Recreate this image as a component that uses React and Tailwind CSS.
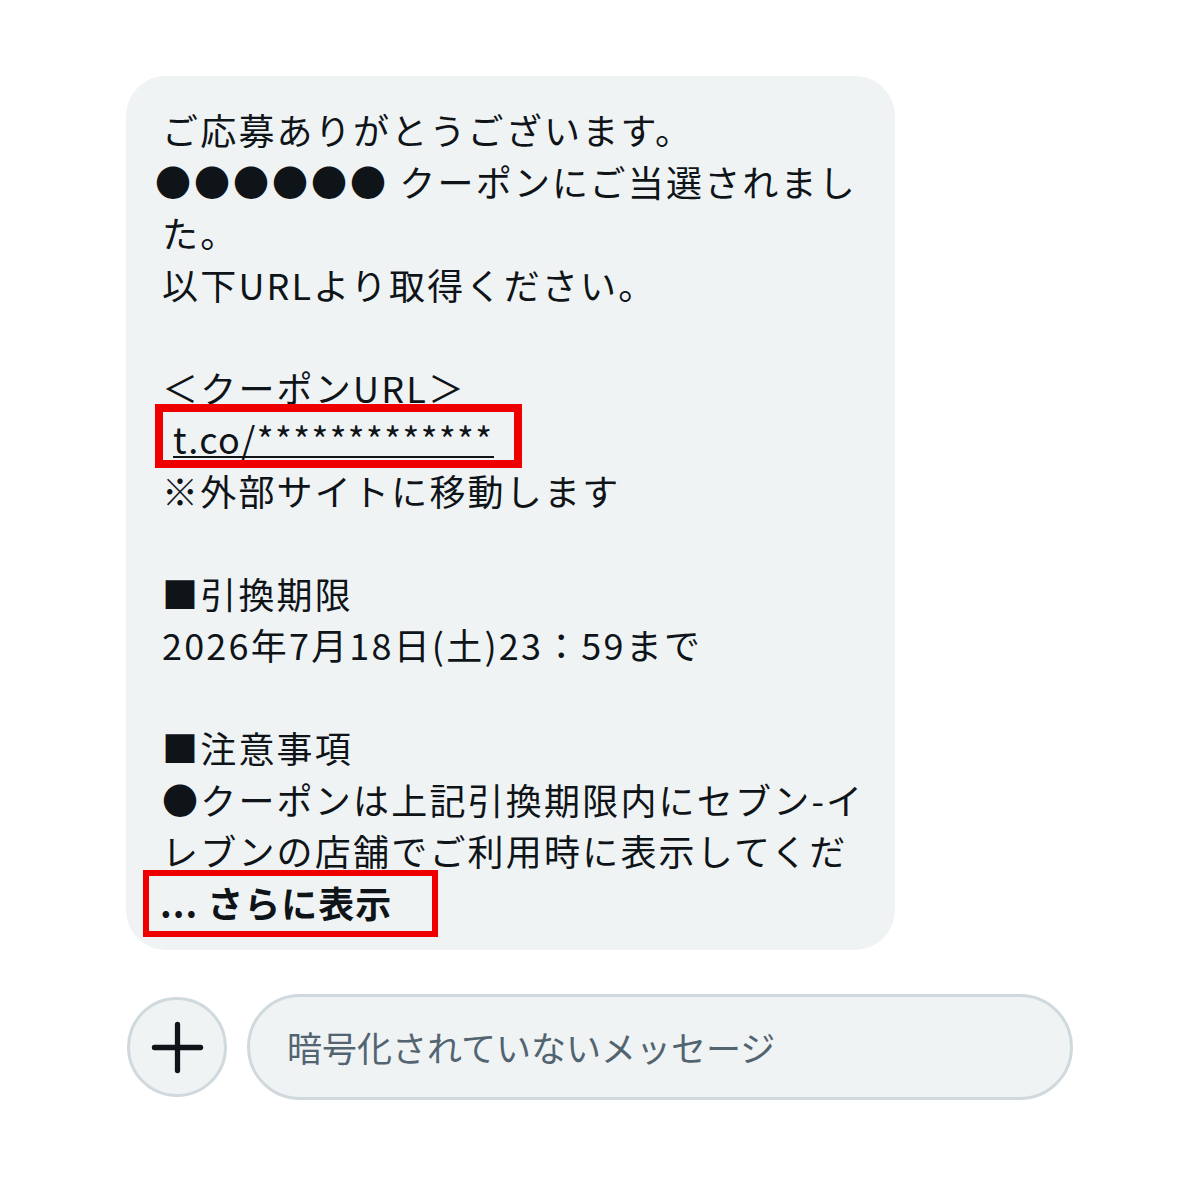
import { Plus } from 'lucide-react';

const font = { fontFamily: '"Noto Sans CJK JP", "Noto Sans", sans-serif' };

function Line({ children, className = '' }) {
  return <div className={`h-[51.5px] whitespace-nowrap leading-[51.5px] ${className}`}>{children}</div>;
}

export default function App() {
  return (
    <div className="min-h-[1200px] w-[1200px] bg-white pt-[76px] text-[#0f1419]" style={font}>
      <div className="ml-[126px] w-[769px] rounded-[40px] bg-[#eff3f4] pb-[22px] pl-[36px] pr-[20px] pt-[28px] text-[36px] tracking-[2.2px]">
        <Line>ご応募ありがとうございます。</Line>
        <Line className="-ml-[7px]">
          <span className="tracking-[3px]">●●●●●●</span> クーポンにご当選されまし
        </Line>
        <Line>た。</Line>
        <Line>以下URLより取得ください。</Line>
        <Line />
        <Line>＜クーポンURL＞</Line>
        <Line className="relative">
          <span className="ml-[11px] inline-block border-b-2 border-[#0f1419] leading-[36px] tracking-[1.4px]">
            t.co/*************
          </span>
          <span className="absolute left-[-7px] top-[-9px] h-[64px] w-[367px] border-[8px] border-[#ee0000]" />
        </Line>
        <Line>※外部サイトに移動します</Line>
        <Line />
        <Line>■引換期限</Line>
        <Line>2026年7月18日(土)23：59まで</Line>
        <Line />
        <Line>■注意事項</Line>
        <Line>●クーポンは上記引換期限内にセブン-イ</Line>
        <Line>レブンの店舗でご利用時に表示してくだ</Line>
        <Line className="relative font-bold">
          <span className="-ml-[2px] tracking-[1px]">... さらに表示</span>
          <span className="absolute left-[-19px] top-[-7px] h-[67px] w-[295px] border-[6px] border-[#ee0000]" />
        </Line>
      </div>

      <div className="ml-[127px] mt-[44px] flex w-[946px] items-center gap-[20px]">
        <div className="flex h-[100px] w-[100px] shrink-0 items-center justify-center rounded-full border-[3px] border-[#cfd9de] bg-[#eff3f4]">
          <Plus size={79} strokeWidth={1.6} color="#0f1419" absoluteStrokeWidth={false} />
        </div>
        <div className="flex h-[106px] flex-1 items-center rounded-full border-[3px] border-[#cfd9de] bg-[#eff3f4] pl-[37px] text-[35px] text-[#536471]">
          暗号化されていないメッセージ
        </div>
      </div>
    </div>
  );
}
